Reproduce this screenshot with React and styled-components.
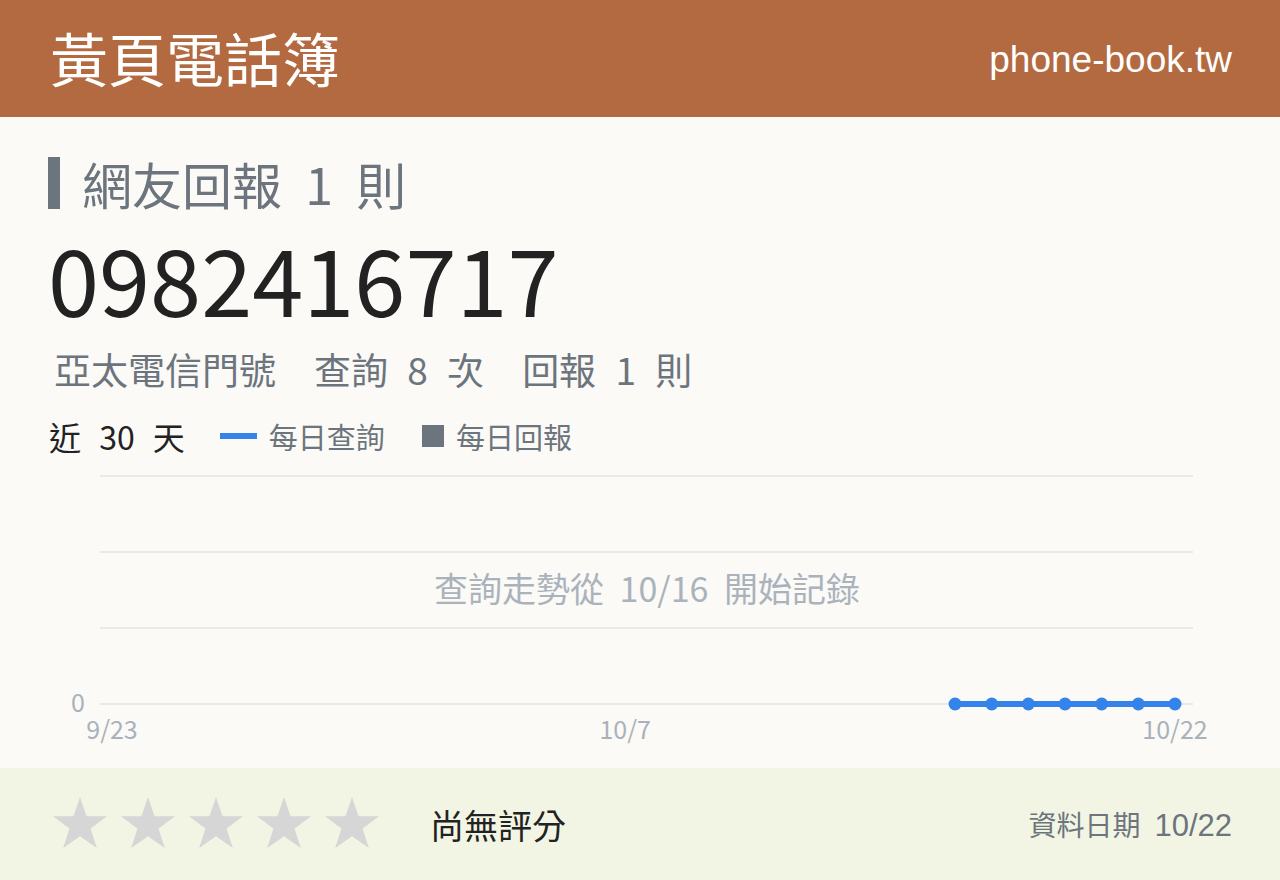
import React from "react";
import styled, { createGlobalStyle } from "styled-components";

const GlobalStyle = createGlobalStyle`
  html, body {
    margin: 0;
    padding: 0;
    background: #fbfaf6;
  }
  body {
    font-family: "Noto Sans CJK TC", "Noto Sans", sans-serif;
    color: #222;
  }
`;

const Page = styled.div`
  width: 1280px;
  height: 880px;
  display: flex;
  flex-direction: column;
  background: #fbfaf6;
  overflow: hidden;
`;

const Header = styled.header`
  height: 117px;
  flex: none;
  background: #b46a40;
  display: flex;
  align-items: center;
  justify-content: space-between;
  padding: 0 48px 0 52px;
  box-sizing: border-box;
`;

const Brand = styled.div`
  font-size: 58px;
  line-height: 1;
  color: #fff;
  margin-top: -4px;
  margin-left: -2px;
`;

const Domain = styled.div`
  font-family: "Liberation Sans", Arial, sans-serif;
  font-size: 37px;
  color: #fff;
  margin-top: 2px;
`;

const Main = styled.main`
  flex: 1;
  display: flex;
  flex-direction: column;
  padding: 40px 48px 0 48px;
`;

const SectionTitle = styled.h2`
  margin: 0;
  display: flex;
  align-items: center;
  gap: 22px;
  height: 52px;
  font-size: 50px;
  line-height: 1;
  font-weight: 400;
  color: #6c757d;
  word-spacing: 12px;
`;

const TitleBar = styled.span`
  width: 12px;
  height: 52px;
  background: #6c757d;
  flex: none;
`;

const PhoneNumber = styled.div`
  font-size: 92px;
  line-height: 1;
  color: #222;
  margin-top: 22px;
`;

const Meta = styled.div`
  display: flex;
  gap: 38px;
  margin-top: 28px;
  padding-left: 6px;
  font-size: 37px;
  line-height: 1;
  color: #6c757d;
  word-spacing: 11px;
`;

const LegendRow = styled.div`
  display: flex;
  align-items: center;
  margin-top: 31px;
  height: 34px;
`;

const Range = styled.span`
  font-size: 32px;
  line-height: 1;
  color: #222;
  word-spacing: 11px;
  margin-left: 1px;
  margin-right: 35px;
`;

const LegendItem = styled.span`
  display: flex;
  align-items: center;
  gap: 12px;
  font-size: 29px;
  line-height: 1;
  color: #6c757d;
  margin-right: 37px;
`;

const Swatch = styled.span`
  flex: none;
  width: ${(p) => (p.$kind === "line" ? "37px" : "22px")};
  height: ${(p) => (p.$kind === "line" ? "6px" : "22px")};
  background: ${(p) => (p.$kind === "line" ? "#3483eb" : "#6c757d")};
`;

const ChartSvg = styled.svg`
  display: block;
  margin-top: 13px;
  width: 1184px;
  height: 290px;
  font-family: "Noto Sans CJK TC", "Noto Sans", sans-serif;
`;

const Footer = styled.footer`
  height: 112px;
  flex: none;
  background: #f2f5e3;
  display: flex;
  align-items: center;
  padding: 0 48px 0 52px;
  box-sizing: border-box;
`;

const Stars = styled.div`
  display: flex;
  gap: 12px;
  margin-right: 50px;
`;

const Rating = styled.span`
  font-size: 34px;
  color: #222;
  flex: 1;
`;

const DataDate = styled.span`
  display: flex;
  align-items: baseline;
  gap: 14px;
  color: #6c757d;
  font-size: 28px;
`;

const DateValue = styled.span`
  font-family: "Liberation Sans", Arial, sans-serif;
  font-size: 31px;
`;

const Star = () => (
  <svg width="56" height="56" viewBox="0 0 56 56">
    <polygon
      points="28,1 34.6,20.2 55,20.2 38.6,32.4 44.8,52 28,40.3 11.2,52 17.4,32.4 1,20.2 21.4,20.2"
      fill="#d6d6d6"
    />
  </svg>
);

const DAYS = 30;
const X0 = 64;
const X1 = 1127;
const step = (X1 - X0) / (DAYS - 1);
const xAt = (i) => X0 + i * step;
const gridY = [10, 86, 162, 238];
const queryDays = [23, 24, 25, 26, 27, 28, 29];

const Chart = () => (
  <ChartSvg viewBox="0 0 1184 290">
    {gridY.map((y) => (
      <line key={y} x1="52" x2="1145" y1={y} y2={y} stroke="#e8eaee" strokeWidth="2" />
    ))}
    <text x="37" y="246" textAnchor="end" fontSize="25" fill="#a9b2bb">0</text>
    <text x={xAt(0)} y="273" textAnchor="middle" fontSize="25" fill="#a9b2bb">9/23</text>
    <text x={xAt(14)} y="273" textAnchor="middle" fontSize="25" fill="#a9b2bb">10/7</text>
    <text x={xAt(29)} y="273" textAnchor="middle" fontSize="25" fill="#a9b2bb">10/22</text>
    <text x="599" y="136" textAnchor="middle" fontSize="34" fill="#aab3bc" wordSpacing="8">
      查詢走勢從 10/16 開始記錄
    </text>
    <polyline
      points={queryDays.map((d) => `${xAt(d)},238`).join(" ")}
      fill="none"
      stroke="#3483eb"
      strokeWidth="6"
    />
    {queryDays.map((d) => (
      <circle key={d} cx={xAt(d)} cy="238" r="6.5" fill="#3483eb" />
    ))}
  </ChartSvg>
);

export default function App() {
  return (
    <>
      <GlobalStyle />
      <Page>
        <Header>
          <Brand>黃頁電話簿</Brand>
          <Domain>phone-book.tw</Domain>
        </Header>
        <Main>
          <SectionTitle>
            <TitleBar />
            <span>網友回報 1 則</span>
          </SectionTitle>
          <PhoneNumber>0982416717</PhoneNumber>
          <Meta>
            <span>亞太電信門號</span>
            <span>查詢 8 次</span>
            <span>回報 1 則</span>
          </Meta>
          <LegendRow>
            <Range>近 30 天</Range>
            <LegendItem>
              <Swatch $kind="line" />
              每日查詢
            </LegendItem>
            <LegendItem>
              <Swatch $kind="box" />
              每日回報
            </LegendItem>
          </LegendRow>
          <Chart />
        </Main>
        <Footer>
          <Stars>
            {[0, 1, 2, 3, 4].map((i) => (
              <Star key={i} />
            ))}
          </Stars>
          <Rating>尚無評分</Rating>
          <DataDate>
            資料日期
            <DateValue>10/22</DateValue>
          </DataDate>
        </Footer>
      </Page>
    </>
  );
}
